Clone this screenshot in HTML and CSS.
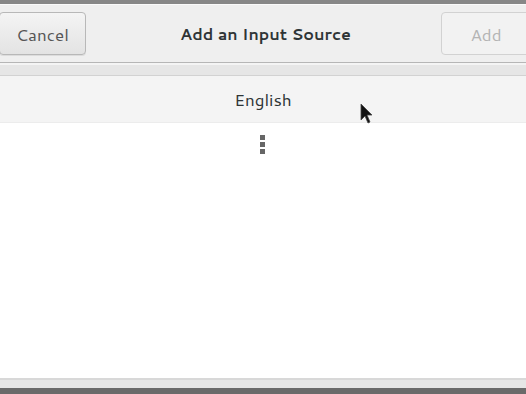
FILE: index.html
```html
<!DOCTYPE html>
<html lang="en">
<head>
    <meta charset="UTF-8">
    <title>Add an Input Source</title>
    <link rel="stylesheet" href="styles.css">
</head>
<body>
    <div class="top-edge"></div>
    <div class="dialog">
        <header class="headerbar">
            <button class="btn cancel">Cancel</button>
            <h1>Add an Input Source</h1>
            <button class="btn add" disabled>Add</button>
        </header>
        <div class="search-strip"></div>
        <div class="list">
            <div class="row selected">English</div>
            <div class="row more">
                <svg width="6" height="20" viewBox="0 0 6 20">
                    <rect x="0" y="0" width="5" height="5" fill="#666"/>
                    <rect x="0" y="7" width="5" height="5" fill="#666"/>
                    <rect x="0" y="14" width="5" height="5" fill="#666"/>
                </svg>
            </div>
        </div>
        <div class="footer"></div>
    </div>
    <div class="bottom-edge"></div>

    <!-- mouse pointer -->
    <svg class="pointer" width="14" height="22" viewBox="0 0 14 22">
        <path d="M1 1 L1 17 L5 13 L8 20 L10 19 L7 12 L12 12 Z" fill="#111" stroke="#444" stroke-width="0.8"/>
    </svg>
</body>
</html>
```

FILE: styles.css
```css
body {
    margin: 0;
    width: 526px;
    height: 394px;
    overflow: hidden;
    font-family: "Cantarell", "Open Sans", "DejaVu Sans", sans-serif;
    background-color: #fff;
    position: relative;
}
.top-edge {
    height: 4px;
    background-color: #878787;
}
.dialog {
    display: flex;
    flex-direction: column;
    height: 384px;
}
.headerbar {
    height: 59px;
    box-sizing: border-box;
    background-color: #efefef;
    border-top: 1px solid #fafafa;
    border-bottom: 1px solid #b6b6b6;
    display: flex;
    align-items: center;
    justify-content: space-between;
}
.headerbar h1 {
    margin: 0;
    font-size: 16px;
    font-weight: bold;
    color: #2e3436;
    padding-left: 4px;
}
.btn {
    font-family: inherit;
    font-size: 17px;
    height: 43px;
    border: 1px solid #b8b8b8;
    border-radius: 4px;
    background: linear-gradient(#f4f4f4, #e3e3e3);
    box-shadow: 0 1px 0 rgba(0,0,0,0.08);
}
.cancel {
    width: 87px;
    margin-left: -1px;
    color: #555;
}
.add {
    width: 90px;
    margin-right: -5px;
    color: #b4b4b4;
    background: #f2f2f2;
    border-color: #d2d2d2;
    box-shadow: none;
}
.search-strip {
    height: 10px;
    background-color: #e6e6e6;
    border-top: 2px solid #f4f4f4;
    border-bottom: 1px solid #d2d2d2;
}
.list {
    flex: 1;
    background-color: #fff;
}
.row {
    display: flex;
    justify-content: center;
    align-items: center;
}
.selected {
    height: 46px;
    background-color: #f4f4f4;
    border-bottom: 1px solid #ececec;
    font-size: 17px;
    color: #2e3436;
}
.more {
    padding-top: 12px;
}
.footer {
    height: 8px;
    background-color: #e6e6e6;
    border-top: 2px solid #d8d8d8;
}
.bottom-edge {
    height: 6px;
    background-color: #6a6a6a;
}
.pointer {
    position: absolute;
    left: 360px;
    top: 103px;
}
```
